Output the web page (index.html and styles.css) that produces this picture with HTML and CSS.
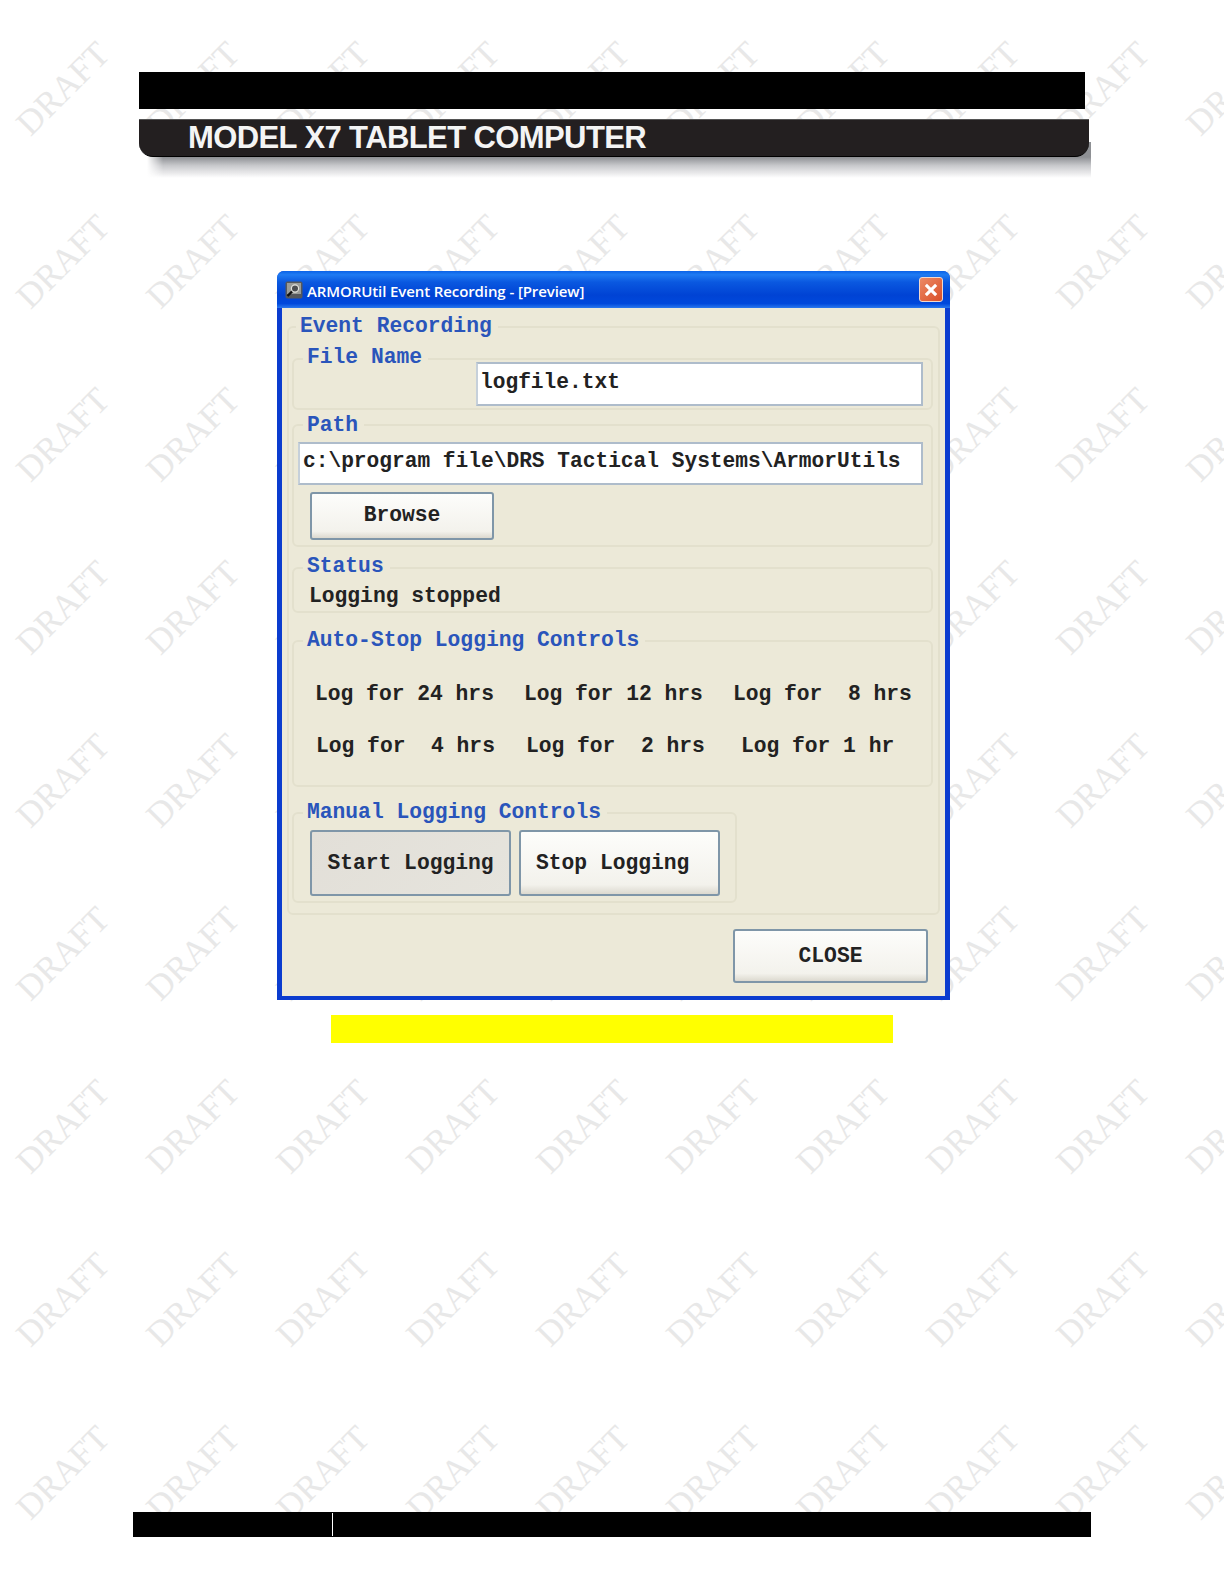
FILE: index.html
```html
<!DOCTYPE html>
<html>
<head>
    <title>Model X7 Tablet Computer</title>
    <link rel="stylesheet" href="styles.css">
</head>
<body>
    <div class="watermarks" id="watermarks"></div>
    <div class="blackBar"></div>
    <div class="pageTitle">MODEL X7 TABLET COMPUTER</div>
    <div class="pageTitleShade"></div>

    <div class="window">
        <div class="titleBar">
            <svg class="appIcon" viewBox="0 0 18 18">
                <rect x="0.5" y="0.5" width="17" height="17" rx="2" fill="#55585c"/>
                <rect x="2" y="2" width="14" height="11" fill="#9a9c98"/>
                <circle cx="10" cy="7.5" r="3.6" fill="#4c4e50" stroke="#e2e2dc" stroke-width="1.2"/>
                <path d="M7 10.5 L2.5 15" stroke="#111" stroke-width="2.4"/>
            </svg>
            <span class="titleText">ARMORUtil Event Recording - [Preview]</span>
            <div class="closeX">
                <svg viewBox="0 0 14 14"><path d="M3 3 L11 11 M11 3 L3 11" stroke="#fff" stroke-width="2.4"/></svg>
            </div>
        </div>
        <div class="client">
            <fieldset class="eventGroup">
                <legend>Event Recording</legend>

                <fieldset class="fileGroup">
                    <legend>File Name</legend>
                    <div class="textBox fileBox">logfile.txt</div>
                </fieldset>

                <fieldset class="pathGroup">
                    <legend>Path</legend>
                    <div class="textBox pathBox">c:\program file\DRS Tactical Systems\ArmorUtils</div>
                    <button class="btn browseBtn">Browse</button>
                </fieldset>

                <fieldset class="statusGroup">
                    <legend>Status</legend>
                    <div class="monoText">Logging stopped</div>
                </fieldset>

                <fieldset class="autoGroup">
                    <legend>Auto-Stop Logging Controls</legend>
                    <div class="autoRow">
                        <span>Log for 24 hrs</span>
                        <span>Log for 12 hrs</span>
                        <span>Log for  8 hrs</span>
                    </div>
                    <div class="autoRow autoRowTwo">
                        <span>Log for  4 hrs</span>
                        <span>Log for  2 hrs</span>
                        <span class="lastOption">Log for 1 hr</span>
                    </div>
                </fieldset>

                <fieldset class="manualGroup">
                    <legend>Manual Logging Controls</legend>
                    <div class="manualButtons">
                        <button class="btn bigBtn pressedBtn">Start Logging</button>
                        <button class="btn bigBtn stopBtn">Stop Logging</button>
                    </div>
                </fieldset>
            </fieldset>

            <div class="closeRow">
                <button class="btn closeBtn">CLOSE</button>
            </div>
        </div>
    </div>

    <div class="yellowBar"></div>
    <div class="footerBar"><div class="footerLeft"></div></div>

    <script>
        const watermarks = document.getElementById('watermarks');
        for (let i = 0; i < 90; i++) {
            const span = document.createElement('span');
            span.textContent = 'DRAFT';
            watermarks.appendChild(span);
        }
    </script>
</body>
</html>
```

FILE: styles.css
```css
html, body {
    margin: 0;
    height: 1584px;
    overflow: hidden;
}
body {
    position: relative;
    background-color: #ffffff;
    font-family: "Liberation Mono", monospace;
    color: #222222;
}

/* DRAFT stamps behind the whole page */
.watermarks {
    position: absolute;
    left: -2px;
    top: 2px;
    z-index: -1;
    display: grid;
    grid-template-columns: repeat(10, 130px);
    grid-auto-rows: 173px;
}
.watermarks span {
    display: flex;
    align-items: center;
    justify-content: center;
    font-family: "Liberation Serif", serif;
    font-size: 35px;
    color: #e8e8e8;
    transform: rotate(-45deg);
}

.blackBar {
    width: 946px;
    height: 37px;
    margin: 72px 0 0 139px;
    background-color: #000000;
}
.pageTitle {
    position: relative;
    z-index: 1;
    box-sizing: border-box;
    width: 950px;
    height: 38px;
    margin: 10px 0 0 139px;
    padding-left: 49px;
    background-color: #231f20;
    border-top: 1px solid #555555;
    border-bottom: 1px solid #000000;
    border-radius: 0 0 14px 14px;
    color: #f4f4f4;
    font-family: "Liberation Sans", sans-serif;
    font-size: 31px;
    font-weight: bold;
    letter-spacing: -0.6px;
    line-height: 35px;
}
.pageTitleShade {
    width: 944px;
    height: 36px;
    margin: -15px 0 0 147px;
    background: linear-gradient(#8e9094 0, #8e9094 42%, #c9cacd 66%, rgba(255, 255, 255, 0) 100%);
    -webkit-mask-image: linear-gradient(to right, transparent, #000 16px);
    mask-image: linear-gradient(to right, transparent, #000 16px);
}

.window {
    box-sizing: border-box;
    width: 673px;
    height: 729px;
    margin: 93px 0 0 277px;
    background-color: #0b3ccf;
    border-radius: 7px 7px 0 0;
    display: flex;
    flex-direction: column;
}
.titleBar {
    flex: 0 0 37px;
    display: flex;
    align-items: center;
    padding: 0 7px 0 8px;
    border-radius: 7px 7px 0 0;
    background: linear-gradient(#0a62e8 0, #1f7bf2 10%, #0a58e0 30%, #0043d4 65%, #0048dc 88%, #2a78ee 100%);
}
.appIcon {
    width: 18px;
    height: 18px;
    margin-right: 4px;
}
.titleText {
    flex: 1;
    padding-top: 3px;
    color: #ffffff;
    font-family: "Open Sans", sans-serif;
    font-size: 15px;
    font-weight: 600;
    letter-spacing: -0.1px;
}
.closeX {
    box-sizing: border-box;
    width: 24px;
    height: 25px;
    border: 1px solid #f2d8cc;
    border-radius: 3px;
    background: linear-gradient(135deg, #ec8a66, #d94f28);
    display: flex;
    align-items: center;
    justify-content: center;
}
.closeX svg {
    width: 18px;
    height: 18px;
}
.client {
    flex: 1;
    margin: 0 5px 4px;
    padding: 18px 5px 0;
    background-color: #ece9d8;
}

fieldset {
    margin: 0;
    padding: 0;
    min-width: 0;
    border: 2px solid #e3e0cd;
    border-radius: 6px;
}
legend {
    position: relative;
    top: -1px;
    height: 0;
    margin-left: 9px;
    padding: 0 6px 0 4px;
    color: #2a55bb;
    font-size: 21.3px;
    font-weight: bold;
    line-height: 0;
    white-space: pre;
}
.eventGroup {
    padding: 30px 5px 10px 3px;
}
.eventGroup > legend {
    margin-left: 4px;
}
.fileGroup {
    display: flex;
    justify-content: flex-end;
    height: 52px;
    box-sizing: border-box;
    padding: 2px 8px 0 0;
}
.fileGroup > legend {
    top: -2px;
}
.textBox {
    box-sizing: border-box;
    height: 43px;
    padding-left: 3px;
    background-color: #ffffff;
    border: 2px solid #aebccb;
    border-left-color: #c6d0da;
    font-size: 21.2px;
    font-weight: bold;
    line-height: 35px;
    white-space: pre;
}
.fileBox {
    width: 447px;
    height: 44px;
    padding-left: 2px;
    line-height: 37px;
}
.pathBox {
    margin-left: 4px;
}
.pathGroup {
    box-sizing: border-box;
    height: 123px;
    margin-top: 14px;
    padding: 16px 8px 0 0;
}
.pathGroup > legend {
    top: 0;
}
.btn {
    box-sizing: border-box;
    display: block;
    padding: 0;
    background: linear-gradient(#fdfdfb, #f3f2ec 85%, #dcd9cf);
    border: 2px solid #7f96a8;
    border-radius: 3px;
    color: #222222;
    font-family: "Liberation Mono", monospace;
    font-size: 21.3px;
    font-weight: bold;
}
.browseBtn {
    width: 184px;
    height: 48px;
    margin: 7px 0 0 16px;
    padding-bottom: 2px;
}
.statusGroup {
    box-sizing: border-box;
    height: 46px;
    margin-top: 20px;
    padding-top: 15px;
}
.statusGroup > legend {
    top: -2px;
}
.monoText {
    margin-left: 15px;
    font-size: 21.3px;
    font-weight: bold;
    line-height: 24px;
}
.autoGroup {
    box-sizing: border-box;
    height: 147px;
    margin-top: 27px;
    padding-top: 26px;
}
.autoRow {
    display: flex;
    gap: 30px;
    height: 52px;
    margin-left: 21px;
    align-items: center;
    font-size: 21.3px;
    font-weight: bold;
    white-space: pre;
}
.autoRowTwo {
    margin-left: 22px;
    gap: 31px;
}
.lastOption {
    margin-left: 5px;
}
.manualGroup {
    box-sizing: border-box;
    width: 445px;
    height: 91px;
    margin-top: 25px;
    padding-top: 16px;
}
.manualButtons {
    display: flex;
    gap: 8px;
    margin-left: 16px;
}
.bigBtn {
    width: 201px;
    height: 66px;
}
.pressedBtn {
    background: linear-gradient(135deg, #e2dfd8, #e6e4dd);
}
.stopBtn {
    padding-left: 15px;
    text-align: left;
}
.closeRow {
    display: flex;
    justify-content: flex-end;
    margin-top: 14px;
    padding-right: 12px;
}
.closeBtn {
    width: 195px;
    height: 54px;
}

.yellowBar {
    width: 562px;
    height: 28px;
    margin: 15px 0 0 331px;
    background-color: #ffff00;
}
.footerBar {
    box-sizing: border-box;
    width: 958px;
    height: 25px;
    margin: 469px 0 0 133px;
    padding: 1px 0;
    background-color: #000000;
}
.footerLeft {
    width: 199px;
    height: 100%;
    border-right: 1px solid #ffffff;
}
```
